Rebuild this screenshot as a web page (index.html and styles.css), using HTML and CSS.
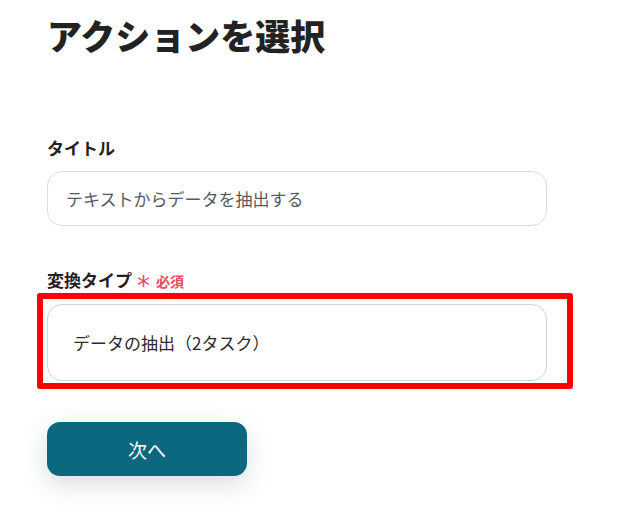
FILE: index.html
```html
<!DOCTYPE html>
<html lang="ja">
<head>
<meta charset="utf-8">
<link rel="stylesheet" href="styles.css">
</head>
<body>
<main class="page">
  <h1 class="heading">アクションを選択</h1>
  <div class="field field-title">
    <label class="label">タイトル</label>
    <div class="input">テキストからデータを抽出する</div>
  </div>
  <div class="field field-type">
    <label class="label">変換タイプ<span class="req"><span class="star">*</span>必須</span></label>
    <div class="select-wrap">
      <div class="select">データの抽出（2タスク）</div>
      <div class="highlight"></div>
    </div>
  </div>
  <button class="btn">次へ</button>
</main>
</body>
</html>
```

FILE: styles.css
```css
html, body {
  margin: 0;
  padding: 0;
  background: #ffffff;
}
body {
  font-family: "Noto Sans CJK JP", "Noto Sans", sans-serif;
  color: #222222;
  min-height: 522px;
}
.page {
  width: 500px;
  padding-left: 47px;
  padding-bottom: 40px;
  display: flex;
  flex-direction: column;
}
.heading {
  margin: 11px 0 0;
  font-size: 35px;
  line-height: 48px;
  font-weight: 900;
  color: #222;
  letter-spacing: 0;
}
.field {
  display: flex;
  flex-direction: column;
  gap: 11px;
}
.field-title {
  margin-top: 77px;
}
.field-type {
  margin-top: 40px;
}
.label {
  font-size: 17px;
  line-height: 24px;
  font-weight: 700;
  color: #222;
  display: flex;
  align-items: center;
}
.req {
  color: #ec4a63;
  font-size: 14px;
  font-weight: 700;
  margin-left: 5px;
  display: inline-flex;
  align-items: center;
  padding-top: 3px;
}
.star {
  font-size: 26px;
  line-height: 14px;
  margin-right: 6px;
  padding-top: 10px;
  font-family: "DejaVu Sans", sans-serif;
  font-weight: 400;
}
.input {
  box-sizing: border-box;
  height: 55px;
  border: 1px solid #d8dde3;
  border-radius: 15px;
  padding: 0 18px;
  display: flex;
  align-items: center;
  font-size: 17px;
  color: #555b62;
}
.select-wrap {
  position: relative;
}
.select {
  box-sizing: border-box;
  height: 77px;
  border: 1px solid #d3d3d3;
  border-radius: 15px;
  padding: 0 25px;
  display: flex;
  align-items: center;
  font-size: 17px;
  color: #2b2b2b;
}
.highlight {
  position: absolute;
  left: -10px;
  top: -11px;
  right: -26px;
  bottom: -8px;
  border: 6px solid #ff0000;
  border-radius: 3px;
  pointer-events: none;
}
.btn {
  margin-top: 41px;
  width: 200px;
  height: 54px;
  border: none;
  border-radius: 13px;
  background: #0b687f;
  color: #ffffff;
  font-family: "Noto Sans CJK JP", "Noto Sans", sans-serif;
  font-size: 19px;
  box-shadow: 0 8px 24px rgba(40, 60, 80, 0.18);
  cursor: pointer;
}
```
